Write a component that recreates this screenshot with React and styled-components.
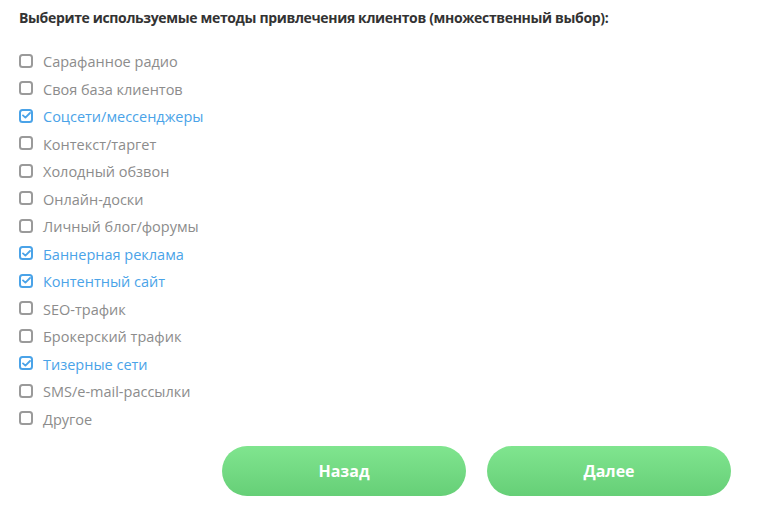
import React, { useState } from "react";
import styled, { createGlobalStyle } from "styled-components";

const GlobalStyle = createGlobalStyle`
  html, body {
    margin: 0;
    padding: 0;
    background: #ffffff;
    font-family: "Open Sans", "Noto Sans", sans-serif;
  }
`;

const options = [
  { name: "Сарафанное радио", checked: false },
  { name: "Своя база клиентов", checked: false },
  { name: "Соцсети/мессенджеры", checked: true },
  { name: "Контекст/таргет", checked: false },
  { name: "Холодный обзвон", checked: false },
  { name: "Онлайн-доски", checked: false },
  { name: "Личный блог/форумы", checked: false },
  { name: "Баннерная реклама", checked: true },
  { name: "Контентный сайт", checked: true },
  { name: "SEO-трафик", checked: false },
  { name: "Брокерский трафик", checked: false },
  { name: "Тизерные сети", checked: true },
  { name: "SMS/e-mail-рассылки", checked: false },
  { name: "Другое", checked: false },
];

const App = () => {
  const [items, setItems] = useState(options);

  const toggle = (name) =>
    setItems(
      items.map((item) =>
        item.name === name ? { ...item, checked: !item.checked } : item
      )
    );

  return (
    <Container>
      <GlobalStyle />
      <Title>
        Выберите используемые методы привлечения клиентов (множественный выбор):
      </Title>
      <List>
        {items.map(({ name, checked }) => (
          <Row key={name} $checked={checked} onClick={() => toggle(name)}>
            <Box $checked={checked}>
              {checked && (
                <svg width="9" height="7" viewBox="0 0 9 7">
                  <path
                    d="M1 3.4 L3.4 5.6 L8 1"
                    fill="none"
                    stroke="#4aa3e8"
                    strokeWidth="1.8"
                    strokeLinecap="round"
                    strokeLinejoin="round"
                  />
                </svg>
              )}
            </Box>
            <span>{name}</span>
          </Row>
        ))}
      </List>
      <Buttons>
        <Button>Назад</Button>
        <Button>Далее</Button>
      </Buttons>
    </Container>
  );
};

const Container = styled.div`
  width: 768px;
  height: 514px;
  box-sizing: border-box;
  padding: 8px 37px 0 19px;
  display: flex;
  flex-direction: column;
`;

const Title = styled.h2`
  margin: 0;
  font-size: 14px;
  font-weight: 700;
  letter-spacing: -0.35px;
  color: #333333;
  line-height: 20px;
  white-space: nowrap;
`;

const List = styled.ul`
  list-style: none;
  margin: 20px 0 0;
  padding: 0;
  display: flex;
  flex-direction: column;
`;

const Row = styled.li`
  height: 27.5px;
  display: flex;
  align-items: center;
  gap: 10px;
  font-size: 14.5px;
  color: ${({ $checked }) => ($checked ? "#4aa3e8" : "#8c8c8c")};
  cursor: pointer;
  user-select: none;
`;

const Box = styled.span`
  width: 14px;
  height: 14px;
  box-sizing: border-box;
  border: 2px solid ${({ $checked }) => ($checked ? "#4aa3e8" : "#9a9a9a")};
  border-radius: 3.5px;
  display: flex;
  align-items: center;
  justify-content: center;
  flex-shrink: 0;
  margin-top: -2px;
`;

const Buttons = styled.div`
  display: flex;
  justify-content: flex-end;
  gap: 21px;
  margin-top: 13px;
`;

const Button = styled.button`
  width: 244px;
  height: 50px;
  border: none;
  border-radius: 25px;
  background: linear-gradient(to bottom, #80e58f, #66cf77);
  color: #ffffff;
  font-family: "Open Sans", "Noto Sans", sans-serif;
  font-size: 16px;
  font-weight: 700;
  cursor: pointer;
  &:focus {
    outline: none;
  }
`;

export default App;
